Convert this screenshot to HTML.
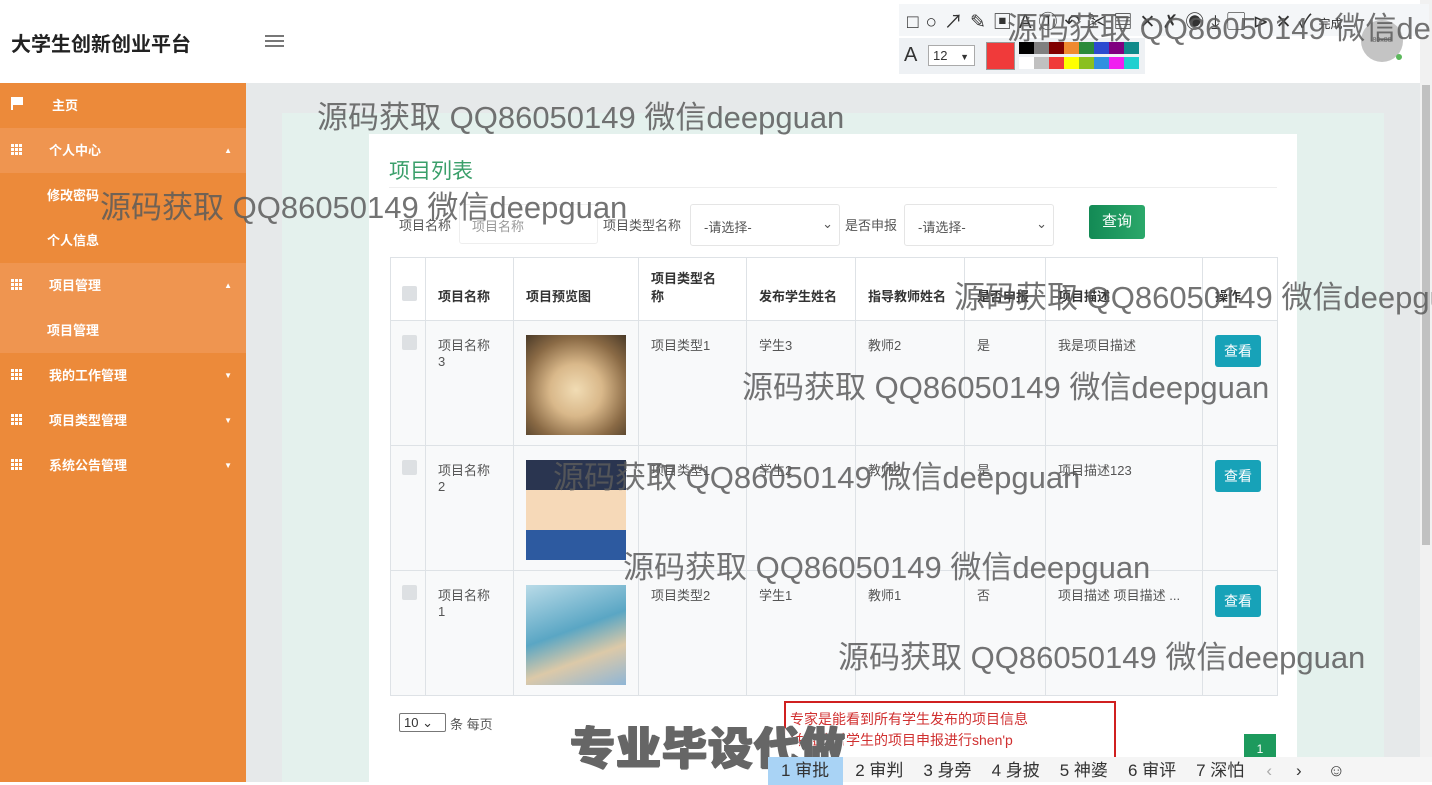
<!DOCTYPE html>
<html><head><meta charset="utf-8"><style>
*{margin:0;padding:0;box-sizing:border-box}
body{width:1432px;height:782px;overflow:hidden;position:relative;font-family:"Liberation Sans","Noto Sans CJK SC",sans-serif;background:#fff;color:#333}
.abs{position:absolute}
.side{left:0;top:83px;width:246px;height:699px;background:#ec8a3a}
.mi{position:absolute;left:0;width:246px;height:45px;color:#fff;font-size:13px;font-weight:bold;line-height:45px}
.mi .ic{position:absolute;left:11px;top:16px;width:12px;height:11px;background:
linear-gradient(#fff,#fff) 0 0/3px 3px,linear-gradient(#fff,#fff) 4px 0/3px 3px,linear-gradient(#fff,#fff) 8px 0/3px 3px,
linear-gradient(#fff,#fff) 0 4px/3px 3px,linear-gradient(#fff,#fff) 4px 4px/3px 3px,linear-gradient(#fff,#fff) 8px 4px/3px 3px,
linear-gradient(#fff,#fff) 0 8px/3px 3px,linear-gradient(#fff,#fff) 4px 8px/3px 3px,linear-gradient(#fff,#fff) 8px 8px/3px 3px;background-repeat:no-repeat}
.mi .t{position:absolute;left:49px}
.mi .ar{position:absolute;right:14px;top:0;font-size:8px}
.wm{position:absolute;color:rgba(90,90,90,.85);font-size:31px;white-space:nowrap;font-family:"Liberation Sans","Noto Sans CJK SC",sans-serif}
table{border-collapse:collapse;position:absolute;left:390px;top:257px;font-size:13px;table-layout:fixed;width:887px}
td,th{border:1px solid #dee2e6;vertical-align:top;text-align:left;padding:0 12px}
th{height:63px;vertical-align:bottom;padding-bottom:14px;font-weight:bold;color:#333;line-height:18px}
td{height:125px;padding-top:14px;color:#555;background:#f8f9fa}
.cb{display:inline-block;width:15px;height:15px;background:#dde0e3;border-radius:2px}
.btn{display:inline-block;background:#17a2b8;color:#fff;padding:6px 9px;border-radius:3px;font-size:14px}
.img{width:100px;height:100px}
</style></head><body>
<div class="abs" style="left:11px;top:28px;font-size:20px;font-weight:bold;color:#222">大学生创新创业平台</div>
<div class="abs" style="left:265px;top:35px;width:19px;height:2px;background:#777;box-shadow:0 5px #777,0 10px #777"></div>
<div class="abs side"></div>
<div class="mi" style="top:83px"><span style="position:absolute;left:11px;top:14px;width:12px;height:13px;"><span style="position:absolute;left:0;top:0;width:2px;height:13px;background:#fff"></span><span style="position:absolute;left:2px;top:0;width:10px;height:8px;background:#fff"></span></span><span class="t" style="left:52px">主页</span></div>
<div class="mi" style="top:128px;background:#ef9550"><span class="ic"></span><span class="t">个人中心</span><span class="ar">▲</span></div>
<div class="mi" style="top:173px"><span class="t" style="left:47px">修改密码</span></div>
<div class="mi" style="top:218px"><span class="t" style="left:47px">个人信息</span></div>
<div class="mi" style="top:263px;background:#ef9550"><span class="ic"></span><span class="t">项目管理</span><span class="ar">▲</span></div>
<div class="mi" style="top:308px;background:#ef9550"><span class="t" style="left:47px">项目管理</span></div>
<div class="mi" style="top:353px"><span class="ic"></span><span class="t">我的工作管理</span><span class="ar">▼</span></div>
<div class="mi" style="top:398px"><span class="ic"></span><span class="t">项目类型管理</span><span class="ar">▼</span></div>
<div class="mi" style="top:443px"><span class="ic"></span><span class="t">系统公告管理</span><span class="ar">▼</span></div>
<div class="abs" style="left:246px;top:83px;width:1174px;height:699px;background:#e6e9ea"></div>
<div class="abs" style="left:282px;top:113px;width:1102px;height:669px;background:#e4f1ed"></div>
<div class="abs" style="left:1420px;top:0;width:12px;height:782px;background:#f1f1f1"></div>
<div class="abs" style="left:1422px;top:85px;width:8px;height:460px;background:#c1c1c1"></div>
<div class="abs" style="left:369px;top:134px;width:928px;height:648px;background:#fff"></div>
<div class="abs" style="left:389px;top:155px;font-size:21px;color:#3a9f6a">项目列表</div>
<div class="abs" style="left:389px;top:187px;width:888px;height:1px;background:#eee"></div>
<div class="abs" style="left:399px;top:215px;font-size:13px;color:#555">项目名称</div>
<div class="abs" style="left:459px;top:204px;width:139px;height:40px;border:1px solid #eee;border-radius:3px;font-size:13px;color:#999;padding:11px 12px">项目名称</div>
<div class="abs" style="left:603px;top:215px;font-size:13px;color:#555">项目类型名称</div>
<div class="abs" style="left:690px;top:204px;width:150px;height:42px;border:1px solid #e5e5e5;border-radius:3px;font-size:13px;color:#555;padding:12px 13px">-请选择-<span style="position:absolute;right:6px;top:11px">⌄</span></div>
<div class="abs" style="left:845px;top:215px;font-size:13px;color:#555">是否申报</div>
<div class="abs" style="left:904px;top:204px;width:150px;height:42px;border:1px solid #e5e5e5;border-radius:3px;font-size:13px;color:#555;padding:12px 13px">-请选择-<span style="position:absolute;right:6px;top:11px">⌄</span></div>
<div class="abs" style="left:1089px;top:205px;width:56px;height:34px;background:linear-gradient(90deg,#138a55,#2ba86a);border-radius:3px;color:#fff;font-size:15px;text-align:center;line-height:33px">查询</div>
<table>
<colgroup><col style="width:35px"><col style="width:88px"><col style="width:125px"><col style="width:108px"><col style="width:109px"><col style="width:109px"><col style="width:81px"><col style="width:157px"><col style="width:75px"></colgroup>
<tr><th style="padding:0 11px 14px"><span class="cb"></span></th><th>项目名称</th><th>项目预览图</th><th>项目类型名<br>称</th><th>发布学生姓名</th><th>指导教师姓名</th><th>是否申报</th><th>项目描述</th><th>操作</th></tr>
<tr><td style="padding:14px 11px"><span class="cb"></span></td><td>项目名称<br>3</td><td><div class="img" style="background:radial-gradient(circle at 50% 55%,#f1dcb4 0,#d9b88a 35%,#8a6a45 70%,#4a3a28 100%)"></div></td><td>项目类型1</td><td>学生3</td><td>教师2</td><td>是</td><td>我是项目描述</td><td><span class="btn">查看</span></td></tr>
<tr><td style="padding:14px 11px"><span class="cb"></span></td><td>项目名称<br>2</td><td><div class="img" style="background:linear-gradient(#2a3550 0,#2a3550 30%,#f6d9b8 30%,#f6d9b8 70%,#2d5aa0 70%)"></div></td><td>项目类型1</td><td>学生2</td><td>教师2</td><td>是</td><td>项目描述123</td><td><span class="btn">查看</span></td></tr>
<tr><td style="padding:14px 11px"><span class="cb"></span></td><td>项目名称<br>1</td><td><div class="img" style="background:linear-gradient(160deg,#b9dbe8,#5aa6c4 45%,#dcc9a8 70%,#8fb6d6)"></div></td><td>项目类型2</td><td>学生1</td><td>教师1</td><td>否</td><td>项目描述 项目描述 ...</td><td><span class="btn">查看</span></td></tr>
</table>
<div class="abs" style="left:399px;top:713px;width:47px;height:19px;border:1px solid #777;border-radius:2px;font-size:13px;padding:1px 4px">10 ⌄</div>
<div class="abs" style="left:450px;top:714px;font-size:13px;color:#555">条 每页</div>
<div class="abs" style="left:1244px;top:734px;width:32px;height:30px;background:#1d9a5d;color:#fff;font-size:12px;text-align:center;padding-top:8px">1</div>
<div class="abs" style="left:784px;top:701px;width:332px;height:60px;border:2px solid #d02020;background:#fff"></div>
<div class="abs" style="left:790px;top:709px;font-size:14px;color:#d03030;line-height:21px">专家是能看到所有学生发布的项目信息<br>并且能对学生的项目申报进行shen'p</div>
<div class="abs" style="left:570px;top:712px;font-size:45px;font-weight:900;color:#666;letter-spacing:1px;text-shadow:1px 0 #666,-1px 0 #666,0 1px #666,2px 2px 0 #fff">专业毕设代做</div>
<div class="abs" style="left:768px;top:757px;width:664px;height:25px;background:#f5f5f5;font-size:17px;color:#333;white-space:nowrap;line-height:28px">
<span style="display:inline-block;background:#a9d3f5;padding:0 14px 0 13px">1 审批</span><span style="margin-left:12px">2 审判</span><span style="margin-left:20px">3 身旁</span><span style="margin-left:20px">4 身披</span><span style="margin-left:20px">5 神婆</span><span style="margin-left:20px">6 审评</span><span style="margin-left:20px">7 深怕</span><span style="margin-left:22px;color:#aaa">‹</span><span style="margin-left:24px">›</span><span style="margin-left:26px">☺</span></div>
<div class="abs" style="left:899px;top:4px;width:530px;height:32px;background:#f4f6f8"></div>
<div class="abs" style="left:899px;top:38px;width:246px;height:36px;background:#eef1f4"></div>
<div class="abs" style="left:907px;top:7px;font-size:19px;color:#333;letter-spacing:7px;white-space:nowrap">□○↗✎▣A①↶✂▤✕✗◉⤓▢⊳✕✓<span style="font-size:12px;letter-spacing:0">完成</span></div>
<div class="abs" style="left:904px;top:44px;font-size:20px;color:#333">A</div>
<div class="abs" style="left:928px;top:45px;width:47px;height:21px;border:1px solid #aaa;background:#fff;font-size:13px;padding:2px 4px">12 <span style="font-size:9px;margin-left:9px">▼</span></div>
<div class="abs" style="left:986px;top:42px;width:29px;height:28px;background:#f03a3a;border:1px solid #999"></div>
<div class="abs" style="left:1019px;top:42px;width:120px;height:28px;background:
linear-gradient(90deg,#000 0 12.5%,#808080 0 25%,#800000 0 37.5%,#f08a30 0 50%,#2a8a3a 0 62.5%,#2c4ad0 0 75%,#800080 0 87.5%,#108a8a 0) 0 0/100% 12px no-repeat,
linear-gradient(90deg,#fff 0 12.5%,#c0c0c0 0 25%,#f03a3a 0 37.5%,#ff0 0 50%,#8ac020 0 62.5%,#3090e0 0 75%,#f020f0 0 87.5%,#20d0d0 0) 0 15px/100% 12px no-repeat"></div>
<div class="abs" style="left:1361px;top:20px;width:42px;height:42px;border-radius:50%;background:#c4c4c4;font-size:7px;color:#666;text-align:center;line-height:42px">80x80</div>
<div class="abs" style="left:1396px;top:54px;width:6px;height:6px;border-radius:50%;background:#5cb85c"></div>
<div class="wm" style="left:1007px;top:3px">源码获取 QQ86050149 微信deepguan</div>
<div class="wm" style="left:317px;top:92px">源码获取 QQ86050149 微信deepguan</div>
<div class="wm" style="left:100px;top:182px">源码获取 QQ86050149 微信deepguan</div>
<div class="wm" style="left:954px;top:272px">源码获取 QQ86050149 微信deepguan</div>
<div class="wm" style="left:742px;top:362px">源码获取 QQ86050149 微信deepguan</div>
<div class="wm" style="left:553px;top:452px">源码获取 QQ86050149 微信deepguan</div>
<div class="wm" style="left:623px;top:542px">源码获取 QQ86050149 微信deepguan</div>
<div class="wm" style="left:838px;top:632px">源码获取 QQ86050149 微信deepguan</div>
</body></html>
